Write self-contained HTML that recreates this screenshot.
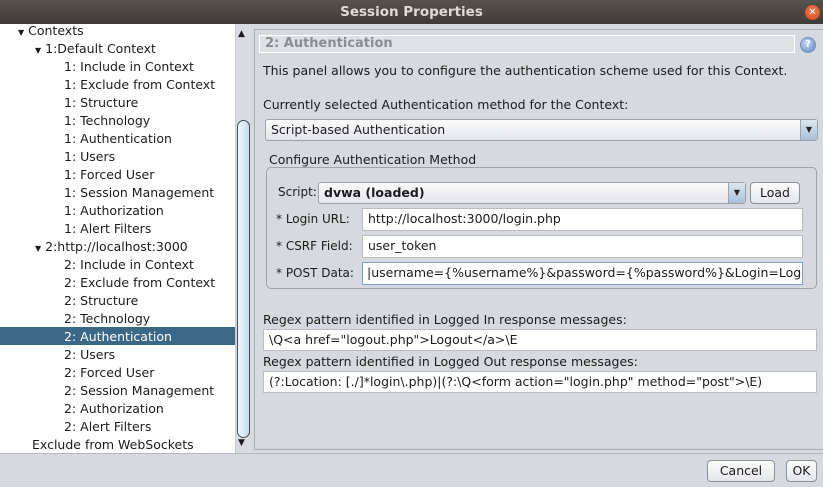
<!DOCTYPE html>
<html><head><meta charset="utf-8"><style>
*{box-sizing:border-box;margin:0;padding:0}
body{width:823px;height:487px;overflow:hidden;background:#d6d9df;font-family:"DejaVu Sans","Liberation Sans",sans-serif;font-size:12.5px;letter-spacing:0;color:#1c1c1c;position:relative}
.a{position:absolute;white-space:nowrap}
.title{left:0;top:0;width:823px;height:24px;background:linear-gradient(#56534d,#3e3c38);color:#dfdbd2;font-weight:bold;font-size:13.5px;text-align:center;line-height:24px;letter-spacing:0}
.close{left:805px;top:5px;width:15px;height:15px;border-radius:50%;background:radial-gradient(circle at 50% 40%,#f27a4c,#d9471b);color:#fff;font-size:10px;line-height:15px;text-align:center}
.tree{left:0;top:24px;width:235px;height:429px;background:#fff;overflow:hidden}
.t{position:absolute;line-height:18px;height:18px;white-space:nowrap}
.sel{left:0;width:235px;background:#3b6886;color:#fff}
.sb{left:235px;top:24px;width:16px;height:429px;background:#d9dbe0;border-left:1px solid #c9ccd2}
.thumb{left:237px;top:120px;width:13px;height:318px;border:1px solid #3f4a55;border-radius:8px;background:linear-gradient(90deg,#f4f8fb,#c9dbea)}
.field{position:absolute;background:#fff;border:1px solid #b9bcc2;line-height:20px;padding-left:5px;overflow:hidden;white-space:nowrap}
.combo{position:absolute;border:1px solid #9ea3aa;border-radius:3px;background:linear-gradient(#fbfbfc,#e3e5e9);line-height:19px;padding-left:5px;white-space:nowrap}
.arr{position:absolute;right:0;top:0;width:17px;height:100%;background:linear-gradient(#dbe6f1,#a9bfd6);border-left:1px solid #9ea3aa;font-size:8px;text-align:center;line-height:19px;color:#222}
.btn{position:absolute;border:1px solid #8d9198;border-radius:4px;background:linear-gradient(#fdfdfd,#e4e6ea);text-align:center;line-height:20px}
.lb{font-size:12px}
</style></head><body>
<div class="a title">Session Properties</div>
<div class="a close">✕</div>

<div class="a tree">
<div class="t" style="left:18px;top:-2px"><span style="font-size:8px">▼</span> Contexts</div>
<div class="t" style="left:35px;top:16px"><span style="font-size:8px">▼</span> 1:Default Context</div>
<div class="t" style="left:64px;top:34px">1: Include in Context</div>
<div class="t" style="left:64px;top:52px">1: Exclude from Context</div>
<div class="t" style="left:64px;top:70px">1: Structure</div>
<div class="t" style="left:64px;top:88px">1: Technology</div>
<div class="t" style="left:64px;top:106px">1: Authentication</div>
<div class="t" style="left:64px;top:124px">1: Users</div>
<div class="t" style="left:64px;top:142px">1: Forced User</div>
<div class="t" style="left:64px;top:160px">1: Session Management</div>
<div class="t" style="left:64px;top:178px">1: Authorization</div>
<div class="t" style="left:64px;top:196px">1: Alert Filters</div>
<div class="t" style="left:35px;top:214px"><span style="font-size:8px">▼</span> 2:http://localhost:3000</div>
<div class="t" style="left:64px;top:232px">2: Include in Context</div>
<div class="t" style="left:64px;top:250px">2: Exclude from Context</div>
<div class="t" style="left:64px;top:268px">2: Structure</div>
<div class="t" style="left:64px;top:286px">2: Technology</div>
<div class="t sel" style="top:303px;line-height:19px"><span style="padding-left:64px">2: Authentication</span></div>
<div class="t" style="left:64px;top:322px">2: Users</div>
<div class="t" style="left:64px;top:340px">2: Forced User</div>
<div class="t" style="left:64px;top:358px">2: Session Management</div>
<div class="t" style="left:64px;top:376px">2: Authorization</div>
<div class="t" style="left:64px;top:394px">2: Alert Filters</div>
<div class="t" style="left:32px;top:412px">Exclude from WebSockets</div>
</div>
<div class="a sb"></div>
<div class="a" style="left:238px;top:29px;font-size:9px">▲</div>
<div class="a" style="left:238px;top:438px;font-size:9px">▼</div>
<div class="a thumb"></div>

<div class="a" style="left:254px;top:29px;width:569px;height:421px;border:1px solid #a9adb4;border-right:none"></div>
<div class="field" style="left:259px;top:35px;width:536px;height:18px;background:#dfe1e5;line-height:16px;color:#8a8d92;font-weight:bold;font-size:13px;border-color:#fff">2: Authentication</div>
<div class="a" style="left:800px;top:37px;width:16px;height:16px;border-radius:50%;background:radial-gradient(circle at 40% 35%,#c7d8f0,#5d85c2);border:1px solid #6f8fbf;color:#fff;font-size:10px;font-weight:bold;text-align:center;line-height:14px">?</div>
<div class="a" style="left:263px;top:63px">This panel allows you to configure the authentication scheme used for this Context.</div>
<div class="a" style="left:263px;top:97px">Currently selected Authentication method for the Context:</div>
<div class="combo" style="left:265px;top:119px;width:553px;height:22px">Script-based Authentication<div class="arr">▼</div></div>
<div class="a" style="left:269px;top:152px">Configure Authentication Method</div>
<div class="a" style="left:266px;top:167px;width:551px;height:122px;border:1px solid #9ea3aa;border-radius:5px"></div>
<div class="a lb" style="left:278px;top:185px">Script:</div>
<div class="combo" style="left:318px;top:182px;width:428px;height:22px;font-weight:bold">dvwa (loaded)<div class="arr">▼</div></div>
<div class="btn" style="left:750px;top:182px;width:50px;height:22px">Load</div>
<div class="a lb" style="left:276px;top:212px">* Login URL:</div>
<div class="field" style="left:362px;top:208px;width:441px;height:23px">http://localhost:3000/login.php</div>
<div class="a lb" style="left:276px;top:239px">* CSRF Field:</div>
<div class="field" style="left:362px;top:235px;width:441px;height:23px">user_token</div>
<div class="a lb" style="left:276px;top:266px">* POST Data:</div>
<div class="field" style="left:362px;top:262px;width:441px;height:23px;border-color:#7ea0c8;padding-left:4px">|username={%username%}&amp;password={%password%}&amp;Login=Login</div>
<div class="a" style="left:263px;top:312px">Regex pattern identified in Logged In response messages:</div>
<div class="field" style="left:263px;top:329px;width:554px;height:22px">\Q&lt;a href="logout.php"&gt;Logout&lt;/a&gt;\E</div>
<div class="a" style="left:263px;top:354px">Regex pattern identified in Logged Out response messages:</div>
<div class="field" style="left:263px;top:371px;width:554px;height:22px">(?:Location: [./]*login\.php)|(?:\Q&lt;form action="login.php" method="post"&gt;\E)</div>

<div class="a" style="left:0;top:453px;width:823px;height:1px;background:#b5b8be"></div>
<div class="btn" style="left:707px;top:460px;width:68px;height:22px">Cancel</div>
<div class="btn" style="left:786px;top:460px;width:31px;height:22px">OK</div>
</body></html>
